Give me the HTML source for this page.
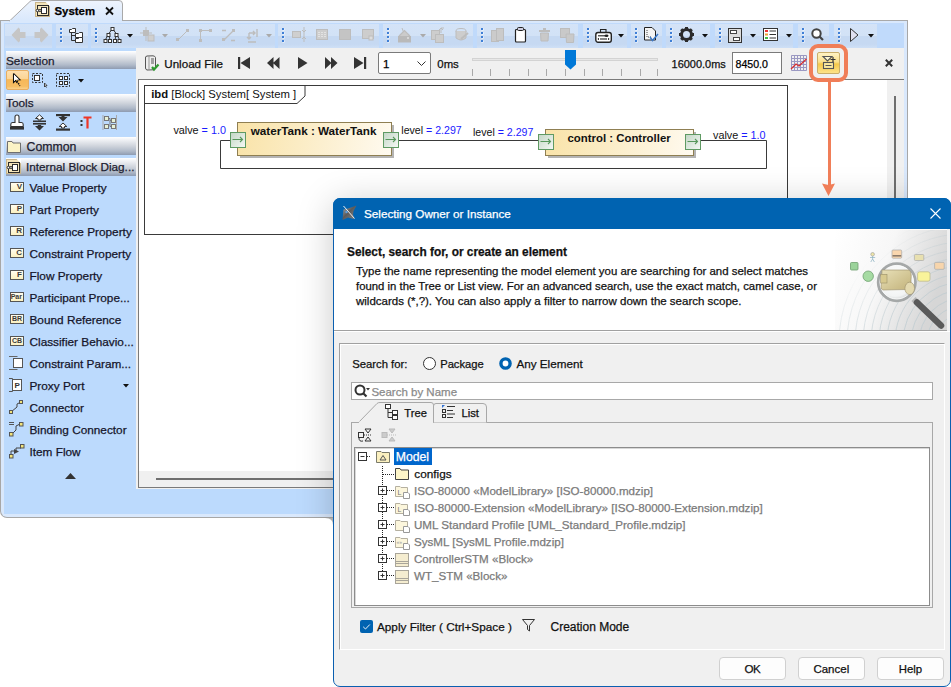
<!DOCTYPE html>
<html><head><meta charset="utf-8"><style>
*{box-sizing:border-box;margin:0;padding:0}
html,body{width:951px;height:687px;overflow:hidden;background:#fff;font-family:"Liberation Sans",sans-serif;color:#000}
.a{position:absolute}
.t{position:absolute;line-height:20px;white-space:nowrap;-webkit-text-stroke:0.25px currentColor}
svg{overflow:visible}
</style></head><body>
<div class="a" style="left:0px;top:20px;width:908px;height:498px;background:#d9e8fc;border:1px solid #a7a7a7;border-top-color:#a9a9a9;border-radius:0 0 7px 7px"></div>
<svg class="a" style="left:0px;top:0px;" width="130" height="24" viewBox="0 0 130 24"><defs><linearGradient id="tabg" x1="0" y1="0" x2="0" y2="1"><stop offset="0" stop-color="#eef4fd"/><stop offset="1" stop-color="#d9e8fc"/></linearGradient></defs><path d="M9.5 21 L30 1.5 Q31 0.5 33 0.5 L119 0.5 Q122.5 0.5 122.5 4 L122.5 21" fill="url(#tabg)" stroke="#a9a9a9"/><rect x="10" y="20" width="112" height="4" fill="#d9e8fc"/></svg>
<svg class="a" style="left:35px;top:2px;" width="15" height="15" viewBox="0 0 15 15"><rect x="0.5" y="0.5" width="14" height="14" fill="#f3e4b9" stroke="#c9b58a"/><path d="M10.5 0 L15 4.5 V0Z" fill="#fff"/><rect x="2.5" y="3.5" width="11" height="10" fill="none" stroke="#2b2b2b"/><path d="M2.5 8.5 H5.5" stroke="#2b2b2b"/><circle cx="2.5" cy="8.5" r="1.3" fill="#fff" stroke="#2b2b2b"/><circle cx="5" cy="8.5" r="1.1" fill="#fff" stroke="#2b2b2b"/><rect x="6.5" y="5.5" width="5" height="6" fill="#fff" stroke="#2b2b2b"/></svg>
<div class="t " style="left:54.5px;top:0.55px;font-size:11.4px;font-weight:bold">System</div>
<svg class="a" style="left:105px;top:7px;" width="9" height="8" viewBox="0 0 9 8"><path d="M1 0.5 L8 7.5 M8 0.5 L1 7.5" stroke="#111" stroke-width="1.8"/></svg>
<div class="a" style="left:4px;top:23px;width:900px;height:25px;background:#c0dafb"></div>
<div class="a" style="left:5px;top:24px;width:47px;height:23.5px;background:linear-gradient(#d4e3f7 0,#d2e2f6 50%,#c6d9f2 52%,#c6d9f2 84%,#cfe0f6 100%)"></div>
<div class="a" style="left:56px;top:24px;width:32px;height:23.5px;background:linear-gradient(#d4e3f7 0,#d2e2f6 50%,#c6d9f2 52%,#c6d9f2 84%,#cfe0f6 100%)"></div>
<svg class="a" style="left:60px;top:27px;" width="4" height="16" viewBox="0 0 4 16"><rect x="0.5" y="1.5" width="2" height="2" fill="#fff"/><rect x="0" y="1" width="2" height="2" fill="#3f7fd6"/><rect x="0.5" y="5.5" width="2" height="2" fill="#fff"/><rect x="0" y="5" width="2" height="2" fill="#3f7fd6"/><rect x="0.5" y="9.5" width="2" height="2" fill="#fff"/><rect x="0" y="9" width="2" height="2" fill="#3f7fd6"/><rect x="0.5" y="13.5" width="2" height="2" fill="#fff"/><rect x="0" y="13" width="2" height="2" fill="#3f7fd6"/></svg>
<div class="a" style="left:91px;top:24px;width:184px;height:23.5px;background:linear-gradient(#d4e3f7 0,#d2e2f6 50%,#c6d9f2 52%,#c6d9f2 84%,#cfe0f6 100%)"></div>
<svg class="a" style="left:95px;top:27px;" width="4" height="16" viewBox="0 0 4 16"><rect x="0.5" y="1.5" width="2" height="2" fill="#fff"/><rect x="0" y="1" width="2" height="2" fill="#3f7fd6"/><rect x="0.5" y="5.5" width="2" height="2" fill="#fff"/><rect x="0" y="5" width="2" height="2" fill="#3f7fd6"/><rect x="0.5" y="9.5" width="2" height="2" fill="#fff"/><rect x="0" y="9" width="2" height="2" fill="#3f7fd6"/><rect x="0.5" y="13.5" width="2" height="2" fill="#fff"/><rect x="0" y="13" width="2" height="2" fill="#3f7fd6"/></svg>
<div class="a" style="left:278px;top:24px;width:101px;height:23.5px;background:linear-gradient(#d4e3f7 0,#d2e2f6 50%,#c6d9f2 52%,#c6d9f2 84%,#cfe0f6 100%)"></div>
<svg class="a" style="left:282px;top:27px;" width="4" height="16" viewBox="0 0 4 16"><rect x="0.5" y="1.5" width="2" height="2" fill="#fff"/><rect x="0" y="1" width="2" height="2" fill="#3f7fd6"/><rect x="0.5" y="5.5" width="2" height="2" fill="#fff"/><rect x="0" y="5" width="2" height="2" fill="#3f7fd6"/><rect x="0.5" y="9.5" width="2" height="2" fill="#fff"/><rect x="0" y="9" width="2" height="2" fill="#3f7fd6"/><rect x="0.5" y="13.5" width="2" height="2" fill="#fff"/><rect x="0" y="13" width="2" height="2" fill="#3f7fd6"/></svg>
<div class="a" style="left:383px;top:24px;width:90px;height:23.5px;background:linear-gradient(#d4e3f7 0,#d2e2f6 50%,#c6d9f2 52%,#c6d9f2 84%,#cfe0f6 100%)"></div>
<svg class="a" style="left:387px;top:27px;" width="4" height="16" viewBox="0 0 4 16"><rect x="0.5" y="1.5" width="2" height="2" fill="#fff"/><rect x="0" y="1" width="2" height="2" fill="#3f7fd6"/><rect x="0.5" y="5.5" width="2" height="2" fill="#fff"/><rect x="0" y="5" width="2" height="2" fill="#3f7fd6"/><rect x="0.5" y="9.5" width="2" height="2" fill="#fff"/><rect x="0" y="9" width="2" height="2" fill="#3f7fd6"/><rect x="0.5" y="13.5" width="2" height="2" fill="#fff"/><rect x="0" y="13" width="2" height="2" fill="#3f7fd6"/></svg>
<div class="a" style="left:477px;top:24px;width:101px;height:23.5px;background:linear-gradient(#d4e3f7 0,#d2e2f6 50%,#c6d9f2 52%,#c6d9f2 84%,#cfe0f6 100%)"></div>
<svg class="a" style="left:481px;top:27px;" width="4" height="16" viewBox="0 0 4 16"><rect x="0.5" y="1.5" width="2" height="2" fill="#fff"/><rect x="0" y="1" width="2" height="2" fill="#3f7fd6"/><rect x="0.5" y="5.5" width="2" height="2" fill="#fff"/><rect x="0" y="5" width="2" height="2" fill="#3f7fd6"/><rect x="0.5" y="9.5" width="2" height="2" fill="#fff"/><rect x="0" y="9" width="2" height="2" fill="#3f7fd6"/><rect x="0.5" y="13.5" width="2" height="2" fill="#fff"/><rect x="0" y="13" width="2" height="2" fill="#3f7fd6"/></svg>
<div class="a" style="left:583px;top:24px;width:44px;height:23.5px;background:linear-gradient(#d4e3f7 0,#d2e2f6 50%,#c6d9f2 52%,#c6d9f2 84%,#cfe0f6 100%)"></div>
<svg class="a" style="left:587px;top:27px;" width="4" height="16" viewBox="0 0 4 16"><rect x="0.5" y="1.5" width="2" height="2" fill="#fff"/><rect x="0" y="1" width="2" height="2" fill="#3f7fd6"/><rect x="0.5" y="5.5" width="2" height="2" fill="#fff"/><rect x="0" y="5" width="2" height="2" fill="#3f7fd6"/><rect x="0.5" y="9.5" width="2" height="2" fill="#fff"/><rect x="0" y="9" width="2" height="2" fill="#3f7fd6"/><rect x="0.5" y="13.5" width="2" height="2" fill="#fff"/><rect x="0" y="13" width="2" height="2" fill="#3f7fd6"/></svg>
<div class="a" style="left:631px;top:24px;width:31px;height:23.5px;background:linear-gradient(#d4e3f7 0,#d2e2f6 50%,#c6d9f2 52%,#c6d9f2 84%,#cfe0f6 100%)"></div>
<svg class="a" style="left:635px;top:27px;" width="4" height="16" viewBox="0 0 4 16"><rect x="0.5" y="1.5" width="2" height="2" fill="#fff"/><rect x="0" y="1" width="2" height="2" fill="#3f7fd6"/><rect x="0.5" y="5.5" width="2" height="2" fill="#fff"/><rect x="0" y="5" width="2" height="2" fill="#3f7fd6"/><rect x="0.5" y="9.5" width="2" height="2" fill="#fff"/><rect x="0" y="9" width="2" height="2" fill="#3f7fd6"/><rect x="0.5" y="13.5" width="2" height="2" fill="#fff"/><rect x="0" y="13" width="2" height="2" fill="#3f7fd6"/></svg>
<div class="a" style="left:666px;top:24px;width:44px;height:23.5px;background:linear-gradient(#d4e3f7 0,#d2e2f6 50%,#c6d9f2 52%,#c6d9f2 84%,#cfe0f6 100%)"></div>
<svg class="a" style="left:670px;top:27px;" width="4" height="16" viewBox="0 0 4 16"><rect x="0.5" y="1.5" width="2" height="2" fill="#fff"/><rect x="0" y="1" width="2" height="2" fill="#3f7fd6"/><rect x="0.5" y="5.5" width="2" height="2" fill="#fff"/><rect x="0" y="5" width="2" height="2" fill="#3f7fd6"/><rect x="0.5" y="9.5" width="2" height="2" fill="#fff"/><rect x="0" y="9" width="2" height="2" fill="#3f7fd6"/><rect x="0.5" y="13.5" width="2" height="2" fill="#fff"/><rect x="0" y="13" width="2" height="2" fill="#3f7fd6"/></svg>
<div class="a" style="left:715px;top:24px;width:78px;height:23.5px;background:linear-gradient(#d4e3f7 0,#d2e2f6 50%,#c6d9f2 52%,#c6d9f2 84%,#cfe0f6 100%)"></div>
<svg class="a" style="left:719px;top:27px;" width="4" height="16" viewBox="0 0 4 16"><rect x="0.5" y="1.5" width="2" height="2" fill="#fff"/><rect x="0" y="1" width="2" height="2" fill="#3f7fd6"/><rect x="0.5" y="5.5" width="2" height="2" fill="#fff"/><rect x="0" y="5" width="2" height="2" fill="#3f7fd6"/><rect x="0.5" y="9.5" width="2" height="2" fill="#fff"/><rect x="0" y="9" width="2" height="2" fill="#3f7fd6"/><rect x="0.5" y="13.5" width="2" height="2" fill="#fff"/><rect x="0" y="13" width="2" height="2" fill="#3f7fd6"/></svg>
<div class="a" style="left:798px;top:24px;width:31px;height:23.5px;background:linear-gradient(#d4e3f7 0,#d2e2f6 50%,#c6d9f2 52%,#c6d9f2 84%,#cfe0f6 100%)"></div>
<svg class="a" style="left:802px;top:27px;" width="4" height="16" viewBox="0 0 4 16"><rect x="0.5" y="1.5" width="2" height="2" fill="#fff"/><rect x="0" y="1" width="2" height="2" fill="#3f7fd6"/><rect x="0.5" y="5.5" width="2" height="2" fill="#fff"/><rect x="0" y="5" width="2" height="2" fill="#3f7fd6"/><rect x="0.5" y="9.5" width="2" height="2" fill="#fff"/><rect x="0" y="9" width="2" height="2" fill="#3f7fd6"/><rect x="0.5" y="13.5" width="2" height="2" fill="#fff"/><rect x="0" y="13" width="2" height="2" fill="#3f7fd6"/></svg>
<div class="a" style="left:834px;top:24px;width:43px;height:23.5px;background:linear-gradient(#d4e3f7 0,#d2e2f6 50%,#c6d9f2 52%,#c6d9f2 84%,#cfe0f6 100%)"></div>
<svg class="a" style="left:838px;top:27px;" width="4" height="16" viewBox="0 0 4 16"><rect x="0.5" y="1.5" width="2" height="2" fill="#fff"/><rect x="0" y="1" width="2" height="2" fill="#3f7fd6"/><rect x="0.5" y="5.5" width="2" height="2" fill="#fff"/><rect x="0" y="5" width="2" height="2" fill="#3f7fd6"/><rect x="0.5" y="9.5" width="2" height="2" fill="#fff"/><rect x="0" y="9" width="2" height="2" fill="#3f7fd6"/><rect x="0.5" y="13.5" width="2" height="2" fill="#fff"/><rect x="0" y="13" width="2" height="2" fill="#3f7fd6"/></svg>
<svg class="a" style="left:11px;top:27px;" width="15" height="16" viewBox="0 0 15 16"><path d="M0.5 8 L7.5 0.5 L9 2 L9 5 L14.5 5 L14.5 11 L9 11 L9 14 L7.5 15.5Z" fill="#c6c6c6"/></svg>
<svg class="a" style="left:34px;top:27px;" width="15" height="16" viewBox="0 0 15 16"><path d="M14.5 8 L7.5 0.5 L6 2 L6 5 L0.5 5 L0.5 11 L6 11 L6 14 L7.5 15.5Z" fill="#c6c6c6"/></svg>
<svg class="a" style="left:69px;top:28px;" width="15" height="15" viewBox="0 0 15 15"><path d="M2.5 4 V12.5 H6 M2.5 7.5 H6" stroke="#333" fill="none"/><path d="M0.5 4.5 V1.5 H2.5 L3.5 0.5 H6.5 V4.5Z" fill="#fff" stroke="#333"/><path d="M6.5 9.5 V5.5 H9.5 L10.5 4.5 H13.5 V9.5Z" fill="#fff" stroke="#333"/><path d="M6.5 14.5 V10.5 H9.5 L10.5 9.5 H13.5 V14.5Z" fill="#fff" stroke="#333"/></svg>
<svg class="a" style="left:103px;top:27px;" width="19" height="16" viewBox="0 0 19 16"><path d="M8.5 3 L5.5 7 M10.5 3 L13.5 7 M4.5 9 L2.5 12.5 M6 9 L7 12.5 M13 9 L12 12.5 M14.5 9 L16.5 12.5" stroke="#333" fill="none"/><rect x="8" y="0.5" width="3" height="3" fill="#fff" stroke="#333"/><rect x="4" y="6.5" width="3" height="3" fill="#fff" stroke="#333"/><rect x="12" y="6.5" width="3" height="3" fill="#fff" stroke="#333"/><rect x="1" y="12.5" width="3" height="3" fill="#fff" stroke="#333"/><rect x="5.5" y="12.5" width="3" height="3" fill="#fff" stroke="#333"/><rect x="10.5" y="12.5" width="3" height="3" fill="#fff" stroke="#333"/><rect x="15" y="12.5" width="3" height="3" fill="#fff" stroke="#333"/></svg>
<svg class="a" style="left:127px;top:34px;" width="6" height="4" viewBox="0 0 6 4"><path d="M0 0 L6 0 L3 3.5Z" fill="#111"/></svg>
<svg class="a" style="left:140px;top:27px;" width="15" height="15" viewBox="0 0 15 15"><path d="M6 0 V14 M0 6 H12" stroke="#bdbdbd"/><rect x="3" y="3" width="6" height="6" fill="#bdbdbd"/><rect x="8" y="8" width="6" height="6" fill="#cfcfcf" stroke="#bdbdbd"/></svg>
<svg class="a" style="left:162px;top:34px;" width="6" height="4" viewBox="0 0 6 4"><path d="M0 0 L6 0 L3 3.5Z" fill="#aaa"/></svg>
<svg class="a" style="left:176px;top:29px;" width="13" height="13" viewBox="0 0 13 13"><path d="M2 11 L11 2" stroke="#bdbdbd"/><rect x="0" y="9" width="3" height="3" fill="#bdbdbd"/><rect x="10" y="0" width="3" height="3" fill="#bdbdbd"/></svg>
<svg class="a" style="left:199px;top:29px;" width="13" height="13" viewBox="0 0 13 13"><path d="M1.5 12 V1.5 H12" stroke="#bdbdbd" fill="none"/><rect x="0" y="0" width="3" height="3" fill="#bdbdbd"/><rect x="10" y="0" width="3" height="3" fill="#bdbdbd"/><rect x="0" y="10" width="3" height="3" fill="#bdbdbd"/></svg>
<svg class="a" style="left:222px;top:29px;" width="13" height="13" viewBox="0 0 13 13"><path d="M2 11 L11 2 M0 1.5 H4 M9 11.5 H13" stroke="#bdbdbd" stroke-width="1.3"/><rect x="0" y="9" width="3" height="3" fill="#bdbdbd"/><rect x="10" y="0" width="3" height="3" fill="#bdbdbd"/></svg>
<svg class="a" style="left:245px;top:28px;" width="13" height="15" viewBox="0 0 13 15"><path d="M3 14 H11 M4 5 V11 M2 9 L4 11 L6 9 M4 5 H10 M8 3 L10 5 L8 7 M12 1 V9" stroke="#bdbdbd" stroke-width="1.4" fill="none"/></svg>
<svg class="a" style="left:266px;top:34px;" width="6" height="4" viewBox="0 0 6 4"><path d="M0 0 L6 0 L3 3.5Z" fill="#aaa"/></svg>
<svg class="a" style="left:292px;top:27px;" width="15" height="16" viewBox="0 0 15 16"><rect x="0.5" y="4.5" width="8" height="6" fill="#cfcfcf" stroke="#bdbdbd"/><path d="M12 0 V15 M10 3 L12 5 L14 3 M10 12 L12 10 L14 12" stroke="#bdbdbd" fill="none"/></svg>
<svg class="a" style="left:316px;top:29px;" width="12" height="11" viewBox="0 0 12 11"><rect x="0.5" y="0.5" width="11" height="10" fill="#cdcdcd" stroke="#bdbdbd"/><path d="M2 3.5 H10 M2 5.5 H10 M2 7.5 H10" stroke="#e2e2e2" stroke-dasharray="2 1"/></svg>
<svg class="a" style="left:339px;top:29px;" width="12" height="11" viewBox="0 0 12 11"><rect x="0.5" y="0.5" width="11" height="10" fill="#c4c4c4" stroke="#bdbdbd"/></svg>
<svg class="a" style="left:362px;top:29px;" width="12" height="11" viewBox="0 0 12 11"><rect x="0.5" y="0.5" width="11" height="9" fill="#cdcdcd" stroke="#bdbdbd"/><rect x="7" y="7" width="4" height="4" fill="#ddd" stroke="#bdbdbd"/></svg>
<svg class="a" style="left:397px;top:27px;" width="15" height="16" viewBox="0 0 15 16"><path d="M2 9 L7.5 3.5 L12.5 8.5 L8 13" fill="#cbcbcb" stroke="#bdbdbd" stroke-width="1.2"/><path d="M5 1 L6.5 5" stroke="#bdbdbd"/><rect x="1" y="9" width="13" height="6.5" fill="#b9b9b9"/><circle cx="11" cy="11" r="1" fill="#e0e0e0"/></svg>
<svg class="a" style="left:420px;top:34px;" width="6" height="4" viewBox="0 0 6 4"><path d="M0 0 L6 0 L3 3.5Z" fill="#aaa"/></svg>
<svg class="a" style="left:431px;top:27px;" width="14" height="16" viewBox="0 0 14 16"><rect x="0.5" y="3.5" width="8" height="9" fill="#cdcdcd" stroke="#bdbdbd"/><rect x="4.5" y="7.5" width="8" height="8" fill="#cdcdcd" stroke="#bdbdbd"/><path d="M10 6 V1 M8 3 L10 1 L12 3 M10 1 H13" stroke="#bdbdbd" fill="none"/></svg>
<svg class="a" style="left:455px;top:28px;" width="15" height="14" viewBox="0 0 15 14"><ellipse cx="6" cy="3" rx="5" ry="2.5" fill="none" stroke="#bdbdbd"/><path d="M1 3 V10 Q6 14 11 10 V3" fill="#cdcdcd" stroke="#bdbdbd"/><path d="M6 11 L13 5" stroke="#bdbdbd" stroke-width="2"/></svg>
<svg class="a" style="left:491px;top:28px;" width="14" height="15" viewBox="0 0 14 15"><rect x="0.5" y="2.5" width="7" height="11" fill="#cbcbcb" stroke="#bdbdbd"/><rect x="5.5" y="0.5" width="7" height="12" fill="#cbcbcb" stroke="#bdbdbd"/></svg>
<svg class="a" style="left:515px;top:27px;" width="12" height="16" viewBox="0 0 12 16"><rect x="0.5" y="2.5" width="10" height="12.5" rx="1" fill="#fff" stroke="#222" stroke-width="1.2"/><rect x="2.5" y="0.5" width="6" height="3" rx="1" fill="#ccd" stroke="#222"/></svg>
<svg class="a" style="left:539px;top:28px;" width="11" height="14" viewBox="0 0 11 14"><rect x="0" y="2" width="11" height="2" fill="#bdbdbd"/><rect x="4" y="0" width="3" height="2" fill="#bdbdbd"/><path d="M1.5 5 H9.5 L9 13 H2Z" fill="#c9c9c9" stroke="#bdbdbd"/></svg>
<svg class="a" style="left:560px;top:28px;" width="15" height="15" viewBox="0 0 15 15"><rect x="0.5" y="0.5" width="9" height="9" fill="#c9c9c9" stroke="#bdbdbd"/><path d="M6 6 H14 L13.5 14.5 H6.5Z" fill="#c9c9c9" stroke="#bdbdbd"/></svg>
<svg class="a" style="left:595px;top:28px;" width="17" height="15" viewBox="0 0 17 15"><rect x="0.8" y="4.5" width="15.5" height="9.7" rx="2.2" fill="#fff" stroke="#222" stroke-width="1.4"/><path d="M5.5 4.5 V1.5 H11 V4.5" fill="none" stroke="#222" stroke-width="1.1"/><path d="M3 7.8 H10" stroke="#222" stroke-width="1.1"/><ellipse cx="11.5" cy="7.8" rx="2" ry="1.3" fill="#222"/><path d="M5 11 H12" stroke="#222" stroke-width="1.1"/><path d="M3 10 Q4.5 11 3 12 M14 10 Q12.5 11 14 12" stroke="#222" fill="none" stroke-width="1"/></svg>
<svg class="a" style="left:618px;top:34px;" width="6" height="4" viewBox="0 0 6 4"><path d="M0 0 L6 0 L3 3.5Z" fill="#111"/></svg>
<svg class="a" style="left:644px;top:27px;" width="15" height="16" viewBox="0 0 15 16"><path d="M0.5 0.5 H8 L11.5 4 V13 H0.5Z" fill="#f4f4f4" stroke="#222"/><path d="M3 3 L3 10 L7 10" stroke="#444" fill="none" stroke-dasharray="1 1"/><path d="M6 10 L8.5 13.5 L14 7" stroke="#3a78c8" stroke-width="1.5" fill="none"/></svg>
<svg class="a" style="left:679px;top:27px;" width="15" height="15" viewBox="0 0 15 15"><circle cx="7.5" cy="7.5" r="5" fill="none" stroke="#2b2b2b" stroke-width="3"/><rect x="6" y="0" width="3" height="3" fill="#2b2b2b" transform="rotate(0 7.5 7.5)"/><rect x="6" y="0" width="3" height="3" fill="#2b2b2b" transform="rotate(45 7.5 7.5)"/><rect x="6" y="0" width="3" height="3" fill="#2b2b2b" transform="rotate(90 7.5 7.5)"/><rect x="6" y="0" width="3" height="3" fill="#2b2b2b" transform="rotate(135 7.5 7.5)"/><rect x="6" y="0" width="3" height="3" fill="#2b2b2b" transform="rotate(180 7.5 7.5)"/><rect x="6" y="0" width="3" height="3" fill="#2b2b2b" transform="rotate(225 7.5 7.5)"/><rect x="6" y="0" width="3" height="3" fill="#2b2b2b" transform="rotate(270 7.5 7.5)"/><rect x="6" y="0" width="3" height="3" fill="#2b2b2b" transform="rotate(315 7.5 7.5)"/></svg>
<svg class="a" style="left:702px;top:34px;" width="6" height="4" viewBox="0 0 6 4"><path d="M0 0 L6 0 L3 3.5Z" fill="#111"/></svg>
<svg class="a" style="left:728px;top:28px;" width="14" height="15" viewBox="0 0 14 15"><rect x="0.5" y="0.5" width="13" height="14" fill="#ddd" stroke="#333"/><rect x="2.5" y="2.5" width="6" height="3" fill="#fff" stroke="#444"/><rect x="5.5" y="9.5" width="6" height="3" fill="#fff" stroke="#444"/></svg>
<svg class="a" style="left:750px;top:34px;" width="6" height="4" viewBox="0 0 6 4"><path d="M0 0 L6 0 L3 3.5Z" fill="#111"/></svg>
<svg class="a" style="left:763px;top:28px;" width="15" height="13" viewBox="0 0 15 13"><rect x="0.5" y="0.5" width="14" height="12" fill="#fff" stroke="#333"/><rect x="2" y="2" width="3" height="2" fill="#e33"/><rect x="2" y="5.5" width="3" height="2" fill="#f0a030"/><rect x="2" y="9" width="3" height="2" fill="#4b4"/><path d="M6.5 3 H13 M6.5 6.5 H13 M6.5 10 H13" stroke="#333"/></svg>
<svg class="a" style="left:786px;top:34px;" width="6" height="4" viewBox="0 0 6 4"><path d="M0 0 L6 0 L3 3.5Z" fill="#111"/></svg>
<svg class="a" style="left:811px;top:28px;" width="13" height="13" viewBox="0 0 13 13"><circle cx="5.5" cy="5.5" r="4.2" fill="#fff" stroke="#444" stroke-width="2"/><path d="M8.5 8.5 L12 12" stroke="#444" stroke-width="2.2"/></svg>
<svg class="a" style="left:850px;top:28px;" width="9" height="14" viewBox="0 0 9 14"><path d="M0.5 0.5 L8 7 L0.5 13.5Z" fill="#dfe0f0" stroke="#333"/></svg>
<svg class="a" style="left:868px;top:34px;" width="6" height="4" viewBox="0 0 6 4"><path d="M0 0 L6 0 L3 3.5Z" fill="#111"/></svg>
<div class="a" style="left:4px;top:48px;width:132px;height:466px;background:#bcdafd"></div>
<div class="a" style="left:6px;top:51px;width:130px;height:18px;background:linear-gradient(#ffffff 0,#eceef2 20%,#cfd4dc 50%,#b0bac9 78%,#8e9bb1 100%)"></div>
<div class="t " style="left:6px;top:50.71px;font-size:11.8px;color:#1c1c30">Selection</div>
<div class="a" style="left:6px;top:69.5px;width:22.5px;height:20.5px;background:linear-gradient(#fedfae 0,#fcd596 42%,#f6b859 48%,#f7bd62 85%,#fbd28a 100%);border:1px solid #e6ad62;border-radius:2px"></div>
<svg class="a" style="left:13px;top:73px;" width="9" height="14" viewBox="0 0 9 14"><path d="M0.5 0.5 V9.5 L2.7 7.5 L4 10 M0.5 0.5 L7 6.8 L4 7" fill="#fff" stroke="#111" stroke-width="1.1"/><path d="M1 1.5 V8 L2.8 6.5 L6 6.5Z" fill="#fff"/><path d="M4 8 L6.8 13" stroke="#111" stroke-width="1.5" stroke-dasharray="1.5 1"/></svg>
<svg class="a" style="left:32px;top:73px;" width="16" height="15" viewBox="0 0 16 15"><rect x="0.5" y="0.5" width="10" height="9" fill="none" stroke="#333" stroke-dasharray="2 1.5"/><rect x="2.5" y="2.5" width="5" height="5" fill="#fff" stroke="#333"/><path d="M12.5 10 V14 L13.5 13 L14.5 14.5 M12.5 10 L15 12.5 L13.5 12.7" stroke="#333" fill="#fff" stroke-width="0.9"/></svg>
<svg class="a" style="left:56px;top:73px;" width="15" height="15" viewBox="0 0 15 15"><rect x="0.5" y="0.5" width="13" height="13" fill="none" stroke="#333" stroke-dasharray="2 1.5"/><rect x="3.5" y="3.5" width="3" height="3" fill="#fff" stroke="#333"/><rect x="3.5" y="8.5" width="3" height="3" fill="#fff" stroke="#333"/><rect x="8.5" y="3.5" width="3" height="3" fill="#fff" stroke="#333"/><rect x="8.5" y="8.5" width="3" height="3" fill="#fff" stroke="#333"/></svg>
<svg class="a" style="left:78px;top:79px;" width="6" height="4" viewBox="0 0 6 4"><path d="M0 0 L6 0 L3 3.5Z" fill="#111"/></svg>
<div class="a" style="left:6px;top:94px;width:130px;height:18px;background:linear-gradient(#ffffff 0,#eceef2 20%,#cfd4dc 50%,#b0bac9 78%,#8e9bb1 100%)"></div>
<div class="t " style="left:6px;top:92.61px;font-size:11.8px;color:#1c1c30">Tools</div>
<svg class="a" style="left:10px;top:114px;" width="15" height="17" viewBox="0 0 15 17"><path d="M5 8.5 V3 Q5 1 7 1 Q9 1 9 3 V8.5 H11.5 Q13.2 8.5 13.2 10.5 V12.5 H0.8 V10.5 Q0.8 8.5 2.5 8.5Z" fill="#fff" stroke="#333" stroke-width="1.1"/><rect x="0" y="13" width="14" height="2.6" fill="#333"/></svg>
<svg class="a" style="left:33px;top:114px;" width="13" height="17" viewBox="0 0 13 17"><path d="M6.5 0.8 L10.5 4.5 H8 V6 H5 V4.5 H2.5Z" fill="#fff" stroke="#333" stroke-width="1"/><rect x="0" y="6.5" width="13" height="1.6" fill="#333"/><rect x="0" y="9" width="13" height="1.6" fill="#333"/><path d="M6.5 16.5 L11 12 H8.2 V11 H4.8 V12 H2Z" fill="#333"/></svg>
<svg class="a" style="left:56px;top:114px;" width="14" height="17" viewBox="0 0 14 17"><rect x="0" y="0" width="14" height="2.2" fill="#333"/><path d="M7 7.5 L11.5 3 H8.5 V2 H5.5 V3 H2.5Z" fill="#333"/><path d="M7 9 L10.8 12.5 H8.5 V14 H5.5 V12.5 H3.2Z" fill="#fff" stroke="#333" stroke-width="1"/><rect x="0" y="14.5" width="14" height="2.2" fill="#333"/></svg>
<svg class="a" style="left:80px;top:116px;" width="12" height="13" viewBox="0 0 12 13"><rect x="0.5" y="4" width="2" height="2" fill="#333"/><rect x="0.5" y="8" width="2" height="2" fill="#333"/><path d="M3.5 1.5 H11.5 M7.5 1.5 V12.5" stroke="#ee3526" stroke-width="2.2"/></svg>
<svg class="a" style="left:102px;top:115px;" width="15" height="15" viewBox="0 0 15 15"><path d="M1 0 V15" stroke="#a9a9a9"/><rect x="2.5" y="1.5" width="4" height="4" fill="#e6f0d6" stroke="#777"/><rect x="2.5" y="9.5" width="4" height="4" fill="#e6f0d6" stroke="#777"/><rect x="9.5" y="3.5" width="4" height="4" fill="#e6f0d6" stroke="#777"/><rect x="9.5" y="9.5" width="4" height="4" fill="#e6f0d6" stroke="#777"/><path d="M6.5 3.5 H8 V11.5 H9.5 M8 5.5 H9.5" stroke="#777" fill="none"/><path d="M14.5 0 V15" stroke="#a9a9a9"/></svg>
<div class="a" style="left:6px;top:137px;width:130px;height:18px;background:linear-gradient(#ffffff 0,#eceef2 20%,#cfd4dc 50%,#b0bac9 78%,#8e9bb1 100%)"></div>
<svg class="a" style="left:7px;top:140px;" width="14" height="13" viewBox="0 0 14 13"><path d="M0.5 1.5 H5 L6 3 H13.5 V12.5 H0.5Z" fill="#fbf3c6" stroke="#6f6f6f"/></svg>
<div class="t " style="left:26.5px;top:136.74px;font-size:12.3px;color:#1c1c30">Common</div>
<div class="a" style="left:6px;top:158px;width:130px;height:17.5px;background:linear-gradient(#ffffff 0,#eceef2 20%,#cfd4dc 50%,#b0bac9 78%,#8e9bb1 100%)"></div>
<svg class="a" style="left:6px;top:159px;" width="15" height="15" viewBox="0 0 15 15"><rect x="0.5" y="0.5" width="14" height="14" fill="#f3e4b9" stroke="#c9b58a"/><path d="M10.5 0 L15 4.5 V0Z" fill="#fff"/><rect x="2.5" y="3.5" width="11" height="10" fill="none" stroke="#2b2b2b"/><path d="M2.5 8.5 H5.5" stroke="#2b2b2b"/><circle cx="2.5" cy="8.5" r="1.3" fill="#fff" stroke="#2b2b2b"/><circle cx="5" cy="8.5" r="1.1" fill="#fff" stroke="#2b2b2b"/><rect x="6.5" y="5.5" width="5" height="6" fill="#fff" stroke="#2b2b2b"/></svg>
<div class="t " style="left:26px;top:156.93px;font-size:11.75px;color:#1c1c30">Internal Block Diag...</div>
<div class="a" style="left:10px;top:182px;width:14px;height:10px;background:linear-gradient(#fffdf0,#fbf1c0);border:1px solid #555"></div>
<div class="a" style="left:10px;top:182px;width:14px;height:10px;font:bold 8px/10px 'Liberation Sans';color:#3a3a3a;text-align:right;padding-right:2px">V</div>
<div class="t " style="left:29.5px;top:177.91px;font-size:11.8px;color:#15152a">Value Property</div>
<div class="a" style="left:10px;top:204px;width:14px;height:10px;background:linear-gradient(#fffdf0,#fbf1c0);border:1px solid #555"></div>
<div class="a" style="left:10px;top:204px;width:14px;height:10px;font:bold 8px/10px 'Liberation Sans';color:#3a3a3a;text-align:right;padding-right:2px">P</div>
<div class="t " style="left:29.5px;top:199.91px;font-size:11.8px;color:#15152a">Part Property</div>
<div class="a" style="left:10px;top:226px;width:14px;height:10px;background:linear-gradient(#fffdf0,#fbf1c0);border:1px solid #555"></div>
<div class="a" style="left:10px;top:226px;width:14px;height:10px;font:bold 8px/10px 'Liberation Sans';color:#3a3a3a;text-align:right;padding-right:2px">R</div>
<div class="t " style="left:29.5px;top:221.91px;font-size:11.8px;color:#15152a">Reference Property</div>
<div class="a" style="left:10px;top:248px;width:14px;height:10px;background:linear-gradient(#fffdf0,#fbf1c0);border:1px solid #555"></div>
<div class="a" style="left:10px;top:248px;width:14px;height:10px;font:bold 8px/10px 'Liberation Sans';color:#3a3a3a;text-align:right;padding-right:2px">C</div>
<div class="t " style="left:29.5px;top:243.91px;font-size:11.8px;color:#15152a">Constraint Property</div>
<div class="a" style="left:10px;top:270px;width:14px;height:10px;background:linear-gradient(#fffdf0,#fbf1c0);border:1px solid #555"></div>
<div class="a" style="left:10px;top:270px;width:14px;height:10px;font:bold 8px/10px 'Liberation Sans';color:#3a3a3a;text-align:right;padding-right:2px">F</div>
<div class="t " style="left:29.5px;top:265.91px;font-size:11.8px;color:#15152a">Flow Property</div>
<div class="a" style="left:10px;top:292px;width:14px;height:10px;background:linear-gradient(#fffdf0,#fbf1c0);border:1px solid #555"></div>
<div class="a" style="left:10px;top:292px;width:14px;height:10px;font:bold 7px/10px 'Liberation Sans';color:#3a3a3a;text-align:right;padding-right:2px">Par</div>
<div class="t " style="left:29.5px;top:287.91px;font-size:11.8px;color:#15152a">Participant Prope...</div>
<div class="a" style="left:10px;top:314px;width:14px;height:10px;background:linear-gradient(#fffdf0,#fbf1c0);border:1px solid #555"></div>
<div class="a" style="left:10px;top:314px;width:14px;height:10px;font:bold 7px/10px 'Liberation Sans';color:#3a3a3a;text-align:right;padding-right:2px">BR</div>
<div class="t " style="left:29.5px;top:309.91px;font-size:11.8px;color:#15152a">Bound Reference</div>
<div class="a" style="left:10px;top:336px;width:14px;height:10px;background:linear-gradient(#fffdf0,#fbf1c0);border:1px solid #555"></div>
<div class="a" style="left:10px;top:336px;width:14px;height:10px;font:bold 7px/10px 'Liberation Sans';color:#3a3a3a;text-align:right;padding-right:2px">CB</div>
<div class="t " style="left:29.5px;top:331.91px;font-size:11.8px;color:#15152a">Classifier Behavio...</div>
<svg class="a" style="left:9px;top:356px;" width="15" height="14" viewBox="0 0 15 14"><path d="M0 0.5 H8.5 M0 13.5 H8.5" stroke="#666"/><rect x="4.5" y="2.5" width="9" height="9" fill="#fff" stroke="#555"/></svg>
<div class="t " style="left:29.5px;top:353.91px;font-size:11.8px;color:#15152a">Constraint Param...</div>
<svg class="a" style="left:9px;top:378px;" width="15" height="14" viewBox="0 0 15 14"><path d="M0 0.5 H3.5 V13.5 H0" stroke="#555" fill="none"/><rect x="3.5" y="1.5" width="9" height="11" fill="#fff" stroke="#555"/><text x="5.5" y="10" font-size="8" font-family="Liberation Sans" font-weight="bold" fill="#333">P</text></svg>
<div class="t " style="left:29.5px;top:375.91px;font-size:11.8px;color:#15152a">Proxy Port</div>
<svg class="a" style="left:9px;top:400px;" width="15" height="14" viewBox="0 0 15 14"><path d="M2 12 L8 7 L8 4 L12 2" stroke="#444" fill="none"/><rect x="0.5" y="10.5" width="3" height="3" fill="#f3e47a" stroke="#555"/><rect x="10.5" y="0.5" width="3" height="3" fill="#f3e47a" stroke="#555"/></svg>
<div class="t " style="left:29.5px;top:397.91px;font-size:11.8px;color:#15152a">Connector</div>
<svg class="a" style="left:9px;top:421px;" width="15" height="16" viewBox="0 0 15 16"><path d="M0 1.5 H5 M0 3.5 H5" stroke="#555"/><path d="M3 13 L7 9 L7 5 L11 3" stroke="#444" fill="none"/><rect x="0.5" y="11.5" width="3.5" height="3.5" fill="#f3e47a" stroke="#555"/><rect x="10.5" y="1.5" width="3.5" height="3.5" fill="#f3e47a" stroke="#555"/></svg>
<div class="t " style="left:29.5px;top:419.91px;font-size:11.8px;color:#15152a">Binding Connector</div>
<svg class="a" style="left:9px;top:443px;" width="16" height="16" viewBox="0 0 16 16"><path d="M2 13 V8 H7 V5 H12" stroke="#444" fill="none"/><path d="M5 6 L10 8.5 L5 11Z" fill="#444"/><rect x="0.5" y="11.5" width="3.5" height="3.5" fill="#f3e47a" stroke="#555"/><rect x="11.5" y="1.5" width="3.5" height="3.5" fill="#f3e47a" stroke="#555"/></svg>
<div class="t " style="left:29.5px;top:441.91px;font-size:11.8px;color:#15152a">Item Flow</div>
<svg class="a" style="left:123px;top:384px;" width="6" height="4" viewBox="0 0 6 4"><path d="M0 0 L6 0 L3 3.5Z" fill="#111"/></svg>
<svg class="a" style="left:65px;top:473px;" width="11" height="6" viewBox="0 0 11 6"><path d="M0 6 L5.5 0 L11 6Z" fill="#333"/></svg>
<div class="a" style="left:136px;top:48px;width:768px;height:441px;background:#f0f0f0"></div>
<svg class="a" style="left:144px;top:55px;" width="17" height="17" viewBox="0 0 17 17"><path d="M1.5 3 Q1 1.5 3 1 L9 0.8 Q11 1 11.5 2.5 L11.5 13 Q11 14.5 9.5 14.8 L3 15 Q1.5 14.5 1.5 13Z" fill="#eee" stroke="#555"/><path d="M5 1 V15" stroke="#999"/><path d="M7 4 H10 M7 6 H10 M7 8 H10" stroke="#555"/><path d="M8 12 L10 14.5 L14.5 9.5" stroke="#2e9a2e" stroke-width="2.2" fill="none"/></svg>
<div class="t " style="left:164.3px;top:53.78px;font-size:11.6px;color:#111">Unload File</div>
<svg class="a" style="left:238px;top:57px;" width="13" height="12" viewBox="0 0 13 12"><rect x="0" y="0" width="2.2" height="12" fill="#333"/><path d="M2.5 6 L12 0 V12Z" fill="#333"/></svg>
<svg class="a" style="left:267px;top:57px;" width="13" height="12" viewBox="0 0 13 12"><path d="M0 6 L6.5 0 V12Z M6 6 L12.5 0 V12Z" fill="#333"/></svg>
<svg class="a" style="left:298px;top:57px;" width="10" height="12" viewBox="0 0 10 12"><path d="M0 0 L9.5 6 L0 12Z" fill="#333"/></svg>
<svg class="a" style="left:325px;top:57px;" width="13" height="12" viewBox="0 0 13 12"><path d="M0 0 L6.5 6 L0 12Z M6 0 L12.5 6 L6 12Z" fill="#333"/></svg>
<svg class="a" style="left:354px;top:57px;" width="13" height="12" viewBox="0 0 13 12"><path d="M0 0 L9.5 6 L0 12Z" fill="#333"/><rect x="10" y="0" width="2.2" height="12" fill="#333"/></svg>
<div class="a" style="left:378px;top:52px;width:53px;height:22px;background:#fff;border:1px solid #7a7a7a;border-radius:2px"></div>
<div class="t " style="left:383px;top:53.72px;font-size:11.5px;">1</div>
<svg class="a" style="left:417px;top:61px;" width="10" height="6" viewBox="0 0 10 6"><path d="M0.5 0.5 L4.5 4.5 L8.5 0.5" stroke="#333" fill="none"/></svg>
<div class="t " style="left:437.3px;top:53.75px;font-size:11.4px;color:#111">0ms</div>
<div class="a" style="left:472px;top:58px;width:186px;height:3px;background:#e7e7e7;border:1px solid #d3d3d3"></div>
<div class="a" style="left:472px;top:69px;width:1px;height:7px;background:#a9a9a9"></div>
<div class="a" style="left:490px;top:69px;width:1px;height:7px;background:#a9a9a9"></div>
<div class="a" style="left:509px;top:69px;width:1px;height:7px;background:#a9a9a9"></div>
<div class="a" style="left:528px;top:69px;width:1px;height:7px;background:#a9a9a9"></div>
<div class="a" style="left:546px;top:69px;width:1px;height:7px;background:#a9a9a9"></div>
<div class="a" style="left:565px;top:69px;width:1px;height:7px;background:#a9a9a9"></div>
<div class="a" style="left:584px;top:69px;width:1px;height:7px;background:#a9a9a9"></div>
<div class="a" style="left:602px;top:69px;width:1px;height:7px;background:#a9a9a9"></div>
<div class="a" style="left:621px;top:69px;width:1px;height:7px;background:#a9a9a9"></div>
<div class="a" style="left:640px;top:69px;width:1px;height:7px;background:#a9a9a9"></div>
<div class="a" style="left:657px;top:69px;width:1px;height:7px;background:#a9a9a9"></div>
<svg class="a" style="left:565px;top:50px;" width="11" height="20" viewBox="0 0 11 20"><path d="M0 0 H11 V14.5 L5.5 19.5 L0 14.5Z" fill="#0078d7"/></svg>
<div class="t " style="left:671.6px;top:53.91px;font-size:10.95px;color:#111">16000.0ms</div>
<div class="a" style="left:732px;top:52px;width:50px;height:22px;background:#fff;border:1px solid #7a7a7a"></div>
<div class="t " style="left:735.5px;top:54.03px;font-size:10.6px;">8450.0</div>
<svg class="a" style="left:791px;top:55px;" width="16" height="16" viewBox="0 0 16 16"><g stroke="#9a98c2" stroke-width="1"><path d="M0.5 0.5 V15.5 M0.5 0.5 H15.5"/><path d="M3.5 0.5 V15.5 M0.5 3.5 H15.5"/><path d="M6.5 0.5 V15.5 M0.5 6.5 H15.5"/><path d="M9.5 0.5 V15.5 M0.5 9.5 H15.5"/><path d="M12.5 0.5 V15.5 M0.5 12.5 H15.5"/><path d="M15.5 0.5 V15.5 M0.5 15.5 H15.5"/></g><path d="M0 14 L5 9 L8 11 L15.5 4" stroke="#d83030" stroke-width="1.3" fill="none"/></svg>
<div class="a" style="left:817px;top:52px;width:23px;height:22px;background:linear-gradient(#fff3c4 0,#fbe08a 45%,#f5c84a 55%,#fde389 100%);border:1px solid #c9ae6a;border-radius:2px"></div>
<svg class="a" style="left:821px;top:55px;" width="16" height="16" viewBox="0 0 16 16"><path d="M2 1.5 H11 L6.5 6Z" fill="#fff8d0" stroke="#555" stroke-width="1.1"/><path d="M12 2 V7 M9.5 4.5 H14.5" stroke="#333" stroke-width="1.2"/><rect x="2.5" y="7.5" width="10" height="6" fill="#fbe9a0" stroke="#555" stroke-width="1.1"/><path d="M4.5 10.5 H10.5" stroke="#555"/></svg>
<svg class="a" style="left:885px;top:59px;" width="8" height="8" viewBox="0 0 8 8"><path d="M0.8 0.8 L7.2 7.2 M7.2 0.8 L0.8 7.2" stroke="#333" stroke-width="2"/></svg>
<div class="a" style="left:138px;top:79px;width:766px;height:409px;background:#fff;border:1px solid #7a7a7a;border-right:none"></div>
<div class="a" style="left:887px;top:80px;width:17px;height:391px;background:#f0f0f0"></div>
<div class="a" style="left:894px;top:96px;width:2px;height:380px;background:#6f6f6f"></div>
<div class="a" style="left:139px;top:471px;width:748px;height:16px;background:#f0f0f0"></div>
<div class="a" style="left:136px;top:489px;width:768px;height:25px;background:#bcdafd"></div>
<div class="a" style="left:887px;top:471px;width:17px;height:16px;background:#f0f0f0"></div>
<div class="a" style="left:156px;top:478px;width:720px;height:2px;background:#6f6f6f"></div>
<svg class="a" style="left:144px;top:85px;" width="645" height="151" viewBox="0 0 645 151"><rect x="0.5" y="0.5" width="643" height="149" fill="none" stroke="#3a3a3a"/><path d="M0.5 18.5 H153 L161 11 V0.5" fill="none" stroke="#3a3a3a"/></svg>
<div class="t " style="left:151.2px;top:84.08px;font-size:11.3px;color:#111;-webkit-text-stroke:0"><b>ibd</b> [Block] System[ System ]</div>
<svg class="a" style="left:215px;top:125px;" width="560" height="50" viewBox="0 0 560 50"><path d="M15 15.5 H5.5 V43.5 H551.5 V15.5 H486" fill="none" stroke="#3a3a3a"/><path d="M184 15.5 H323.5" stroke="#3a3a3a"/></svg>
<div class="a" style="left:240px;top:125px;width:154px;height:33px;background:#b4b4b4"></div>
<div class="a" style="left:237px;top:122px;width:155px;height:34px;background:linear-gradient(100deg,#f9e3a8 0%,#fbecc4 40%,#fffaf0 100%);border:1px solid #8f7f52"></div>
<div class="t " style="left:250.7px;top:121.15px;font-size:11.7px;font-weight:bold;color:#111;-webkit-text-stroke:0">waterTank : WaterTank</div>
<div class="a" style="left:548px;top:132px;width:148px;height:26px;background:#b4b4b4"></div>
<div class="a" style="left:545px;top:129px;width:149px;height:27px;background:linear-gradient(100deg,#f9e3a8 0%,#fbecc4 40%,#fffaf0 100%);border:1px solid #8f7f52"></div>
<div class="t " style="left:567.5px;top:127.65px;font-size:11.4px;font-weight:bold;color:#111;-webkit-text-stroke:0">control : Controller</div>
<svg class="a" style="left:230px;top:132px;" width="16" height="16" viewBox="0 0 16 16"><defs><linearGradient id="pg230" x1="0" y1="0" x2="1" y2="1"><stop offset="0" stop-color="#c3d6c5"/><stop offset="1" stop-color="#f6f9f6"/></linearGradient></defs><rect x="0.5" y="0.5" width="15" height="15" fill="url(#pg230)" stroke="#5f9a63"/><path d="M2.5 7.5 H12.5 M10 5 L12.5 7.5 L10 10" stroke="#57975b" fill="none" stroke-width="1.1"/></svg>
<svg class="a" style="left:383px;top:132px;" width="16" height="16" viewBox="0 0 16 16"><defs><linearGradient id="pg383" x1="0" y1="0" x2="1" y2="1"><stop offset="0" stop-color="#c3d6c5"/><stop offset="1" stop-color="#f6f9f6"/></linearGradient></defs><rect x="0.5" y="0.5" width="15" height="15" fill="url(#pg383)" stroke="#5f9a63"/><path d="M2.5 7.5 H12.5 M10 5 L12.5 7.5 L10 10" stroke="#57975b" fill="none" stroke-width="1.1"/></svg>
<svg class="a" style="left:538px;top:134px;" width="16" height="16" viewBox="0 0 16 16"><defs><linearGradient id="pg538" x1="0" y1="0" x2="1" y2="1"><stop offset="0" stop-color="#c3d6c5"/><stop offset="1" stop-color="#f6f9f6"/></linearGradient></defs><rect x="0.5" y="0.5" width="15" height="15" fill="url(#pg538)" stroke="#5f9a63"/><path d="M2.5 7.5 H12.5 M10 5 L12.5 7.5 L10 10" stroke="#57975b" fill="none" stroke-width="1.1"/></svg>
<svg class="a" style="left:685px;top:134px;" width="16" height="16" viewBox="0 0 16 16"><defs><linearGradient id="pg685" x1="0" y1="0" x2="1" y2="1"><stop offset="0" stop-color="#c3d6c5"/><stop offset="1" stop-color="#f6f9f6"/></linearGradient></defs><rect x="0.5" y="0.5" width="15" height="15" fill="url(#pg685)" stroke="#5f9a63"/><path d="M2.5 7.5 H12.5 M10 5 L12.5 7.5 L10 10" stroke="#57975b" fill="none" stroke-width="1.1"/></svg>
<div class="t " style="left:173.4px;top:119.96px;font-size:10.8px;color:#111;-webkit-text-stroke:0">valve <span style="color:#1a1aff">= 1.0</span></div>
<div class="t " style="left:401.3px;top:120.03px;font-size:10.6px;color:#111;-webkit-text-stroke:0">level <span style="color:#1a1aff">= 2.297</span></div>
<div class="t " style="left:473px;top:121.53px;font-size:10.6px;color:#111;-webkit-text-stroke:0">level <span style="color:#1a1aff">= 2.297</span></div>
<div class="t " style="left:713px;top:124.86px;font-size:10.8px;color:#111;-webkit-text-stroke:0">valve <span style="color:#1a1aff">= 1.0</span></div>
<div class="a" style="left:0;top:20px;width:908px;height:498px;overflow:hidden;border-radius:0 0 7px 7px"><div class="a" style="left:333px;top:178px;width:618px;height:489px;border-radius:7px;box-shadow:0 6px 36px rgba(0,0,0,0.22)"></div></div>
<svg class="a" style="left:325px;top:517px;" width="8" height="8" viewBox="0 0 8 8"><path d="M0 0 H8 V8 Q8 1 0 1Z" fill="#9a9a9a" opacity="0.8"/></svg>
<div class="a" style="left:809px;top:44px;width:39px;height:38px;border:4px solid #f07e58;border-radius:9px"></div>
<div class="a" style="left:827.5px;top:81px;width:3px;height:106px;background:#f07e58"></div>
<svg class="a" style="left:822px;top:183px;" width="13" height="14" viewBox="0 0 13 14"><path d="M0 0.5 L6.5 13 L13 0.5 L6.5 2Z" fill="#f07e58"/></svg>
<div class="a" style="left:333px;top:198px;width:618px;height:489px;background:#f0f0f0;border:1px solid #0b5fb0;border-radius:7px;overflow:hidden"></div>
<div class="a" style="left:333px;top:198px;width:618px;height:31px;background:#0063b1;border-radius:7px 7px 0 0"></div>
<svg class="a" style="left:342px;top:205px;" width="16" height="16" viewBox="0 0 16 16"><defs><linearGradient id="lgo" x1="0" y1="0" x2="1" y2="1"><stop offset="0" stop-color="#b0b0b0"/><stop offset="0.45" stop-color="#5a5a5a"/><stop offset="1" stop-color="#8a8a8a"/></linearGradient></defs><path d="M0.5 15 L1.5 4.5 L6 3.5 L9 2.5 L14.5 0.5 L11.5 6 L11 9.5 L12 14 L6 12.5Z" fill="url(#lgo)"/><path d="M1.5 1 L12.5 13.5" stroke="#f0f0f0" stroke-width="1"/><circle cx="4.5" cy="7" r="1.2" fill="#5ea0e0"/></svg>
<div class="t " style="left:364px;top:203.85px;font-size:11.7px;color:#fff">Selecting Owner or Instance</div>
<svg class="a" style="left:930px;top:208px;" width="11" height="11" viewBox="0 0 11 11"><path d="M0.5 0.5 L10.5 10.5 M10.5 0.5 L0.5 10.5" stroke="#fff" stroke-width="1.1"/></svg>
<div class="a" style="left:334px;top:229px;width:616px;height:102px;background:#fff;border-bottom:1px solid #a0a0a0"></div>
<div class="a" style="left:334px;top:331px;width:616px;height:1px;background:#fff"></div>
<div class="t " style="left:347px;top:241.79px;font-size:11.85px;font-weight:bold;color:#111">Select, search for, or create an element</div>
<div class="t " style="left:356px;top:261.03px;font-size:11.45px;color:#111">Type the name representing the model element you are searching for and select matches</div>
<div class="t " style="left:356px;top:276.07px;font-size:11.35px;color:#111">found in the Tree or List view. For an advanced search, use the exact match, camel case, or</div>
<div class="t " style="left:356px;top:291.02px;font-size:11.5px;color:#111">wildcards (*,?). You can also apply a filter to narrow down the search scope.</div>
<svg class="a" style="left:835px;top:230px;" width="113" height="100" viewBox="0 0 113 100"><defs><linearGradient id="hg" x1="0" y1="0" x2="1" y2="0.3"><stop offset="0" stop-color="#fff"/><stop offset="0.5" stop-color="#f7f7f7"/><stop offset="1" stop-color="#d6d6d6"/></linearGradient><radialGradient id="lg" cx="0.45" cy="0.4" r="0.6"><stop offset="0" stop-color="#fff"/><stop offset="0.8" stop-color="#f2f4f4"/><stop offset="1" stop-color="#cfd3d3"/></radialGradient><linearGradient id="tg" x1="0" y1="0" x2="1" y2="1"><stop offset="0" stop-color="#e8e0b8"/><stop offset="1" stop-color="#c2b27a"/></linearGradient><clipPath id="hc"><rect x="0" y="0" width="113" height="100"/></clipPath><linearGradient id="amg" x1="0" y1="0" x2="1" y2="1"><stop offset="0.3" stop-color="#000"/><stop offset="0.75" stop-color="#fff"/></linearGradient><mask id="am"><rect x="0" y="0" width="113" height="100" fill="url(#amg)"/></mask></defs><g clip-path="url(#hc)"><rect x="0" y="0" width="113" height="100" fill="url(#hg)"/><g mask="url(#am)"><circle cx="128" cy="112" r="28" fill="none" stroke="#bccad0" stroke-width="0.7"/><circle cx="128" cy="112" r="36" fill="none" stroke="#bccad0" stroke-width="0.7"/><circle cx="128" cy="112" r="44" fill="none" stroke="#bccad0" stroke-width="0.7"/><circle cx="128" cy="112" r="52" fill="none" stroke="#bccad0" stroke-width="0.7"/><circle cx="128" cy="112" r="60" fill="none" stroke="#bccad0" stroke-width="0.7"/><circle cx="128" cy="112" r="68" fill="none" stroke="#bccad0" stroke-width="0.7"/><circle cx="128" cy="112" r="76" fill="none" stroke="#bccad0" stroke-width="0.7"/><circle cx="128" cy="112" r="84" fill="none" stroke="#bccad0" stroke-width="0.7"/><circle cx="128" cy="112" r="92" fill="none" stroke="#bccad0" stroke-width="0.7"/><circle cx="128" cy="112" r="100" fill="none" stroke="#bccad0" stroke-width="0.7"/><circle cx="128" cy="112" r="108" fill="none" stroke="#bccad0" stroke-width="0.7"/><circle cx="128" cy="112" r="116" fill="none" stroke="#bccad0" stroke-width="0.7"/><circle cx="128" cy="112" r="124" fill="none" stroke="#bccad0" stroke-width="0.7"/></g><rect x="15.5" y="32.5" width="7.5" height="7.5" rx="1" fill="#9bd39a" stroke="#6f9f70" stroke-width="0.8"/><circle cx="33.2" cy="46.2" r="5.2" fill="#a6dba3" stroke="#6f9f70" stroke-width="0.8"/><circle cx="37.6" cy="24.3" r="1.8" fill="#efe6a8" stroke="#999" stroke-width="0.6"/><path d="M37.6 26 V29 M35 27.5 H40.2 M37.6 29 L35.8 32 M37.6 29 L39.4 32" stroke="#8ab0c0" stroke-width="0.7" fill="none"/><rect x="57" y="20" width="9.7" height="8.2" rx="1" fill="#f9d6ae" stroke="#aaa" stroke-width="0.7"/><rect x="57.5" y="25" width="8.7" height="1.6" fill="#8a7a6a"/><rect x="79.4" y="24.5" width="9.4" height="6" rx="1" fill="#e8e0b0" stroke="#aaa" stroke-width="0.7"/><rect x="99.6" y="32.4" width="9.6" height="6.9" rx="1" fill="#f7d5ac" stroke="#aaa" stroke-width="0.7"/><rect x="82.6" y="41.8" width="12.4" height="9.4" rx="2" fill="#f9f39a" stroke="#b8b48a" stroke-width="0.7"/><path d="M78.5 69 L84 74.5" stroke="#b5b5b5" stroke-width="6"/><path d="M82 72.5 L106 95.5" stroke="#5a5a5a" stroke-width="6.5" stroke-linecap="round"/><circle cx="61.8" cy="52.2" r="18.5" fill="url(#lg)" stroke="#a5a8a8" stroke-width="3"/><circle cx="61.8" cy="52.2" r="16.8" fill="none" stroke="#fff" stroke-width="0.8"/><path d="M47 41 Q46 40 48 40 L74 40 Q77 42 76 50 L76 57 Q75 59 72 59.5 L48 60 Q46 59.5 46 57Z" fill="url(#tg)" stroke="#9a8f6a" stroke-width="0.6"/><rect x="45.7" y="44.3" width="6.3" height="8.7" fill="#d7c98f" stroke="#9a8f6a" stroke-width="0.6"/><ellipse cx="74.7" cy="58.4" rx="4.8" ry="6.2" fill="#e4dab0" stroke="#9a8f6a" stroke-width="0.6"/></g></svg>
<div class="a" style="left:947px;top:229px;width:3px;height:102px;background:#f0f0f0"></div>
<div class="a" style="left:339px;top:343px;width:606px;height:307px;border-top:1px solid #a0a0a0;border-left:1px solid #a0a0a0;border-right:1px solid #fff;border-bottom:1px solid #fff;box-shadow:inset 1px 1px 0 #fff"></div>
<div class="t " style="left:352.2px;top:353.88px;font-size:11.3px;color:#111">Search for:</div>
<svg class="a" style="left:423px;top:357px;" width="14" height="14" viewBox="0 0 14 14"><circle cx="6.5" cy="6.5" r="6" fill="#fff" stroke="#333"/></svg>
<div class="t " style="left:440.2px;top:353.92px;font-size:11.2px;color:#111">Package</div>
<svg class="a" style="left:499px;top:357px;" width="14" height="14" viewBox="0 0 14 14"><circle cx="6.5" cy="6.5" r="4.6" fill="#fff" stroke="#0063b1" stroke-width="3.4"/></svg>
<div class="t " style="left:516.4px;top:353.75px;font-size:11.7px;color:#111">Any Element</div>
<div class="a" style="left:351px;top:382px;width:582px;height:18px;background:#fff;border:1px solid #a8a8a8"></div>
<svg class="a" style="left:354px;top:384px;" width="17" height="15" viewBox="0 0 17 15"><circle cx="6" cy="6" r="4.5" fill="none" stroke="#333" stroke-width="2"/><path d="M9 9 L12.5 12.5" stroke="#333" stroke-width="2.2"/><path d="M12 4 H16 L14 6.5Z" fill="#333"/></svg>
<div class="t " style="left:371.4px;top:381.72px;font-size:11.5px;color:#8a8a8a">Search by Name</div>
<div class="a" style="left:351px;top:422px;width:582px;height:186px;border:1px solid #a8a8a8;border-top:1px solid #a8a8a8"></div>
<svg class="a" style="left:358px;top:402px;" width="132" height="22" viewBox="0 0 132 22"><path d="M0.5 20.5 L19 1.5 Q20 0.5 22 0.5 L73 0.5 Q75.5 0.5 75.5 3 L75.5 20" fill="#f0f0f0" stroke="#a8a8a8"/><path d="M75.5 20.5 V4 Q75.5 1.5 78 1.5 L125 1.5 Q128.5 1.5 128.5 5 L128.5 20.5" fill="#f0f0f0" stroke="#a8a8a8"/><rect x="1" y="19.5" width="74" height="3" fill="#f0f0f0"/></svg>
<svg class="a" style="left:385px;top:404px;" width="13" height="16" viewBox="0 0 13 16"><path d="M3 4 V13.5 H7 M3 8.5 H7" stroke="#333" fill="none"/><rect x="0.5" y="0.5" width="5" height="4" fill="#fff" stroke="#333"/><rect x="7.5" y="6.5" width="5" height="4" fill="#fff" stroke="#333"/><rect x="7.5" y="11.5" width="5" height="4" fill="#fff" stroke="#333"/></svg>
<div class="t " style="left:404.3px;top:403.02px;font-size:11.2px;color:#111">Tree</div>
<svg class="a" style="left:442px;top:405px;" width="14" height="14" viewBox="0 0 14 14"><path d="M0 0 L3 0 L0 3Z" fill="#2f6fd0"/><rect x="0.5" y="4.5" width="3" height="3" fill="none" stroke="#333"/><rect x="0.5" y="9.5" width="3" height="3" fill="none" stroke="#333"/><path d="M5 1.5 H13 M5 5.5 H11 M5 9 H13 M5 12.5 H11" stroke="#333"/></svg>
<div class="t " style="left:461.4px;top:402.98px;font-size:11.3px;color:#111">List</div>
<svg class="a" style="left:357px;top:428px;" width="16" height="16" viewBox="0 0 16 16"><rect x="1.5" y="4.5" width="5" height="5" fill="none" stroke="#333"/><path d="M2 10 Q2 14 6 13" stroke="#333" fill="none"/><path d="M8 1 L14 1 L11 5Z M8 13 L14 13 L11 9Z" fill="none" stroke="#333"/><path d="M7 7 H15" stroke="#333" stroke-dasharray="1 1"/></svg>
<svg class="a" style="left:381px;top:428px;" width="16" height="16" viewBox="0 0 16 16"><rect x="1" y="4.5" width="5" height="5" fill="#ccc" stroke="#bbb"/><path d="M8 1 L14 1 L11 5Z M8 13 L14 13 L11 9Z" fill="#ccc" stroke="#bbb"/><path d="M6 7 H15" stroke="#bbb" stroke-dasharray="1 1"/></svg>
<div class="a" style="left:354px;top:447px;width:576px;height:159px;background:#fff;border:1px solid #8c8c8c;box-shadow:inset 1px 1px 0 #d8d8d8"></div>
<svg class="a" style="left:358px;top:449px;overflow:visible" width="30" height="132" viewBox="0 0 30 132"><rect x="0.5" y="3.5" width="8" height="8" fill="#fff" stroke="#333"/><path d="M2.5 7.5 H6.5" stroke="#333"/><path d="M9 7.5 H13" stroke="#333" stroke-dasharray="1 1"/><path d="M24.5 17 V126" stroke="#222" stroke-dasharray="1 1"/><path d="M25 25.5 H36" stroke="#222" stroke-dasharray="1 1"/><rect x="20.5" y="37.5" width="8" height="8" fill="#fff" stroke="#333"/><path d="M22.5 41.5 H26.5 M24.5 39.5 V43.5" stroke="#333"/><path d="M29 41.5 H36" stroke="#222" stroke-dasharray="1 1"/><rect x="20.5" y="54.5" width="8" height="8" fill="#fff" stroke="#333"/><path d="M22.5 58.5 H26.5 M24.5 56.5 V60.5" stroke="#333"/><path d="M29 58.5 H36" stroke="#222" stroke-dasharray="1 1"/><rect x="20.5" y="71.5" width="8" height="8" fill="#fff" stroke="#333"/><path d="M22.5 75.5 H26.5 M24.5 73.5 V77.5" stroke="#333"/><path d="M29 75.5 H36" stroke="#222" stroke-dasharray="1 1"/><rect x="20.5" y="88.5" width="8" height="8" fill="#fff" stroke="#333"/><path d="M22.5 92.5 H26.5 M24.5 90.5 V94.5" stroke="#333"/><path d="M29 92.5 H36" stroke="#222" stroke-dasharray="1 1"/><rect x="20.5" y="105.5" width="8" height="8" fill="#fff" stroke="#333"/><path d="M22.5 109.5 H26.5 M24.5 107.5 V111.5" stroke="#333"/><path d="M29 109.5 H36" stroke="#222" stroke-dasharray="1 1"/><rect x="20.5" y="122.5" width="8" height="8" fill="#fff" stroke="#333"/><path d="M22.5 126.5 H26.5 M24.5 124.5 V128.5" stroke="#333"/><path d="M29 126.5 H36" stroke="#222" stroke-dasharray="1 1"/></svg>
<svg class="a" style="left:376px;top:449px;" width="14" height="14" viewBox="0 0 14 14"><path d="M0.5 2.5 H5 L6 3.5 H13.5 V13.5 H0.5Z" fill="#fbf0bf" stroke="#7a7a6a"/><path d="M4 11 L7 6.5 L10 11Z" fill="none" stroke="#555"/></svg>
<div class="a" style="left:394px;top:448px;width:38px;height:17px;background:#0066cc"></div>
<div class="t " style="left:395.8px;top:447.07px;font-size:12.2px;color:#fff">Model</div>
<svg class="a" style="left:395px;top:467px;" width="14" height="13" viewBox="0 0 14 13"><path d="M0.5 1.5 H5 L6 3 H13.5 V12.5 H0.5Z" fill="#fdf5c8" stroke="#444"/></svg>
<div class="t " style="left:414.3px;top:464.21px;font-size:11.8px;color:#111">configs</div>
<svg class="a" style="left:395px;top:484px;" width="16" height="15" viewBox="0 0 16 15"><path d="M0.5 2.5 H5 L6 3.5 H12.5 V12.5 H0.5Z" fill="#fcf6dc" stroke="#b5b0a0"/><path d="M8.5 8.5 H13 L14.5 10 V14.5 H8.5Z" fill="#fff" stroke="#999"/><text x="2.5" y="10.5" font-size="7" font-family="Liberation Sans" fill="#777">L</text></svg>
<div class="t " style="left:414px;top:481.48px;font-size:11.6px;color:#7a7a7a">ISO-80000 «ModelLibrary» [ISO-80000.mdzip]</div>
<svg class="a" style="left:395px;top:501px;" width="16" height="15" viewBox="0 0 16 15"><path d="M0.5 2.5 H5 L6 3.5 H12.5 V12.5 H0.5Z" fill="#fcf6dc" stroke="#b5b0a0"/><path d="M8.5 8.5 H13 L14.5 10 V14.5 H8.5Z" fill="#fff" stroke="#999"/><text x="2.5" y="10.5" font-size="7" font-family="Liberation Sans" fill="#777">L</text></svg>
<div class="t " style="left:414px;top:498.48px;font-size:11.6px;color:#7a7a7a">ISO-80000-Extension «ModelLibrary» [ISO-80000-Extension.mdzip]</div>
<svg class="a" style="left:395px;top:518px;" width="16" height="15" viewBox="0 0 16 15"><path d="M0.5 2.5 H5 L6 3.5 H12.5 V12.5 H0.5Z" fill="#fcf6dc" stroke="#b5b0a0"/><path d="M8.5 8.5 H13 L14.5 10 V14.5 H8.5Z" fill="#fff" stroke="#999"/></svg>
<div class="t " style="left:414px;top:515.48px;font-size:11.6px;color:#7a7a7a">UML Standard Profile [UML_Standard_Profile.mdzip]</div>
<svg class="a" style="left:395px;top:535px;" width="16" height="15" viewBox="0 0 16 15"><path d="M0.5 2.5 H5 L6 3.5 H12.5 V12.5 H0.5Z" fill="#fcf6dc" stroke="#b5b0a0"/><path d="M8.5 8.5 H13 L14.5 10 V14.5 H8.5Z" fill="#fff" stroke="#999"/><text x="1.5" y="9" font-size="5" font-family="Liberation Sans" fill="#999">«»</text></svg>
<div class="t " style="left:414px;top:532.48px;font-size:11.6px;color:#7a7a7a">SysML [SysML Profile.mdzip]</div>
<svg class="a" style="left:395px;top:553px;" width="15" height="14" viewBox="0 0 15 14"><rect x="0.5" y="0.5" width="13" height="13" fill="#f5edd0" stroke="#a9a59a"/><path d="M0.5 8.5 H13.5 M0.5 10.5 H13.5" stroke="#a9a59a"/></svg>
<div class="t " style="left:414px;top:549.48px;font-size:11.6px;color:#7a7a7a">ControllerSTM «Block»</div>
<svg class="a" style="left:395px;top:570px;" width="15" height="14" viewBox="0 0 15 14"><rect x="0.5" y="0.5" width="13" height="13" fill="#f5edd0" stroke="#a9a59a"/><path d="M0.5 8.5 H13.5 M0.5 10.5 H13.5" stroke="#a9a59a"/></svg>
<div class="t " style="left:414px;top:566.48px;font-size:11.6px;color:#7a7a7a">WT_STM «Block»</div>
<svg class="a" style="left:360px;top:620px;" width="14" height="14" viewBox="0 0 14 14"><rect x="0" y="0" width="13" height="13" rx="2" fill="#0063b1"/><path d="M3.2 6.8 L5.5 9 L9.8 4.5" stroke="#fff" stroke-width="0.9" fill="none"/></svg>
<div class="t " style="left:377px;top:616.93px;font-size:11.75px;color:#111">Apply Filter ( Ctrl+Space )</div>
<svg class="a" style="left:522px;top:619px;" width="13" height="13" viewBox="0 0 13 13"><path d="M0.5 0.5 H12.5 L7.5 6.5 V12 L5.5 10.5 V6.5Z" fill="none" stroke="#333"/></svg>
<div class="t " style="left:550.5px;top:616.84px;font-size:12px;color:#111">Creation Mode</div>
<div class="a" style="left:719px;top:657px;width:67px;height:23px;background:#fdfdfd;border:1px solid #d0d0d0;border-radius:4px"></div>
<div class="t " style="left:744.6px;top:658.98px;font-size:11.6px;color:#111;letter-spacing:-0.6px">OK</div>
<div class="a" style="left:798px;top:657px;width:67px;height:23px;background:#fdfdfd;border:1px solid #d0d0d0;border-radius:4px"></div>
<div class="t " style="left:813.4px;top:659.02px;font-size:11.5px;color:#111;letter-spacing:0">Cancel</div>
<div class="a" style="left:877px;top:657px;width:67px;height:23px;background:#fdfdfd;border:1px solid #d0d0d0;border-radius:4px"></div>
<div class="t " style="left:898.7px;top:659.05px;font-size:11.4px;color:#111;letter-spacing:0">Help</div>
</body></html>
